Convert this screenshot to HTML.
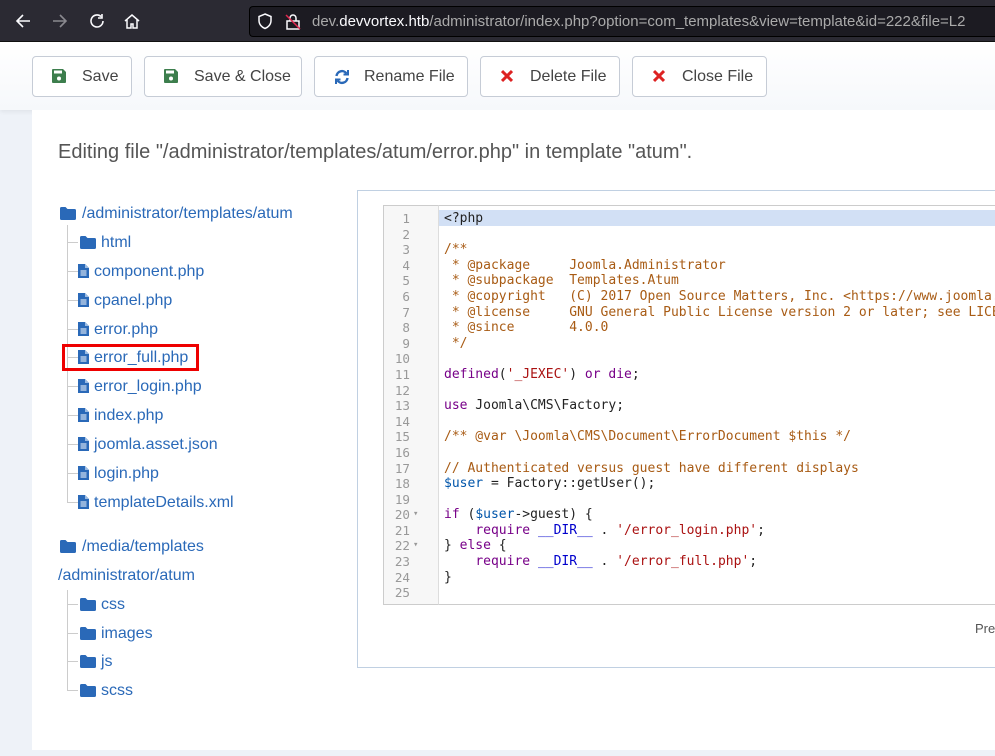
<!DOCTYPE html>
<html><head><meta charset="utf-8"><style>
*{margin:0;padding:0;box-sizing:border-box}
html,body{width:995px;height:756px;overflow:hidden}
body{background:#eef2f8;font-family:"Liberation Sans",sans-serif;position:relative}
.abs{position:absolute}
#bar{left:0;top:0;width:995px;height:42px;background:#2b2a33;border-bottom:1px solid #111}
#url{left:249px;top:6px;width:746px;height:31px;background:#1c1b22;border:1px solid #000;border-right:none;border-radius:4px 0 0 4px;color:#aaa;font-size:15px;line-height:29px;padding-left:62px;white-space:nowrap;overflow:hidden}
#url b{color:#fbfbfe;font-weight:normal}
#tb{left:0;top:42px;width:995px;height:68px;background:linear-gradient(#fff,#f6f8fb);box-shadow:0 2px 4px rgba(0,0,0,.06)}
.btn{position:absolute;top:56px;height:41px;border:1px solid #c6ccd6;border-radius:4px;background:#fff;color:#444;font-size:16px;line-height:39px;white-space:nowrap}
.btn i{position:absolute;left:19px;top:12px;display:block;line-height:0}
.btn span{position:absolute;left:49px}
#card{left:32px;top:110px;width:963px;height:640px;background:#fff}
h1{position:absolute;left:58px;top:141px;font-size:20px;font-weight:normal;color:#555;white-space:nowrap}
.t{position:absolute;color:#2a69b8;font-size:16px;white-space:nowrap;line-height:20px;margin-top:1px}
.vl{position:absolute;left:67px;width:1px;background:#ccc}
.hl{position:absolute;left:67px;width:11px;height:1px;background:#ccc}
#ed{left:357px;top:190px;width:638px;height:478px;border:1px solid #c0d0e2;border-right:none}
#cm{left:383px;top:205px;width:612px;height:400px;border:1px solid #ccc;border-right:none;background:#fff}
#gut{left:383px;top:205px;width:56px;height:400px;background:#f7f7f7;border-right:1px solid #ddd;border-left:1px solid #ccc;border-top:1px solid #ccc;border-bottom:1px solid #ccc}
pre{font-family:"DejaVu Sans Mono","Liberation Mono",monospace;font-size:13px;line-height:15.6px;position:absolute}
#ln{left:386px;top:211px;width:24px;text-align:right;color:#999;font-size:12.6px}
#code{left:444px;top:211px;width:551px;overflow:hidden;color:#222}
.c{color:#a85b14}.k{color:#770088}.v{color:#05a}.s{color:#a11}.d{color:#0000cc}
</style></head><body>
<div id="bar" class="abs">
<svg class="abs" style="left:14px;top:12px" width="18" height="18" viewBox="0 0 18 18" fill="none" stroke="#fbfbfe" stroke-width="1.6"><path d="M16 9H3M9 3L3 9l6 6"/></svg>
<svg class="abs" style="left:51px;top:12px" width="18" height="18" viewBox="0 0 18 18" fill="none" stroke="#8a898f" stroke-width="1.6"><path d="M2 9h13M9 3l6 6-6 6"/></svg>
<svg class="abs" style="left:88px;top:12px" width="18" height="18" viewBox="0 0 18 18" fill="none" stroke="#fbfbfe" stroke-width="1.6"><path d="M15 9a6 6 0 1 1-2-4.5M14 2v4h-4"/></svg>
<svg class="abs" style="left:123px;top:12px" width="18" height="18" viewBox="0 0 18 18" fill="none" stroke="#fbfbfe" stroke-width="1.5"><path d="M2 9l7-6 7 6M4 7.5V16h4v-4h2v4h4V7.5"/></svg>
</div>
<div id="url" class="abs">dev.<b>devvortex.htb</b>/administrator/index.php?option=com_templates&amp;view=template&amp;id=222&amp;file=L2</div>
<svg class="abs" style="left:257px;top:13px" width="16" height="17" viewBox="0 0 16 17" fill="none" stroke="#fbfbfe" stroke-width="1.5"><path d="M8 1l6 2.5v4c0 4-3 7-6 8-3-1-6-4-6-8v-4z"/></svg>
<svg class="abs" style="left:285px;top:13px" width="16" height="17" viewBox="0 0 16 17" fill="none" stroke-width="1.5"><rect x="2" y="8" width="12" height="8" stroke="#fbfbfe"/><path d="M5 8V5a3 3 0 0 1 6 0v3" stroke="#fbfbfe"/><path d="M1 2l14 14" stroke="#e22850"/></svg>
<div id="tb" class="abs"></div>
<div class="btn" style="left:32px;width:100px"><i><svg width="14" height="14" viewBox="0 0 14 14"><path d="M0 1a1 1 0 0 1 1-1h10l3 3v10a1 1 0 0 1-1 1H1a1 1 0 0 1-1-1z" fill="#3d7e4d"/><rect x="2" y="1.5" width="8" height="3" fill="#fff"/><circle cx="7" cy="9.5" r="2" fill="#fff"/></svg></i><span>Save</span></div>
<div class="btn" style="left:144px;width:158px"><i><svg width="14" height="14" viewBox="0 0 14 14"><path d="M0 1a1 1 0 0 1 1-1h10l3 3v10a1 1 0 0 1-1 1H1a1 1 0 0 1-1-1z" fill="#3d7e4d"/><rect x="2" y="1.5" width="8" height="3" fill="#fff"/><circle cx="7" cy="9.5" r="2" fill="#fff"/></svg></i><span>Save &amp; Close</span></div>
<div class="btn" style="left:314px;width:154px"><i><svg width="16" height="16" viewBox="0 0 16 16" fill="none" stroke="#2a69b8" stroke-width="2.4"><path d="M2.5 7A5.5 5.5 0 0 1 12.5 4.5M13.5 9A5.5 5.5 0 0 1 3.5 11.5"/><path d="M14 1v4.5H9.5M2 15v-4.5h4.5" stroke-width="2"/></svg></i><span>Rename File</span></div>
<div class="btn" style="left:480px;width:140px"><i style="left:20px"><svg width="12" height="14" viewBox="0 0 12 14"><path d="M1 2l10 10M11 2L1 12" stroke="#d22" stroke-width="3"/></svg></i><span>Delete File</span></div>
<div class="btn" style="left:632px;width:135px"><i style="left:20px"><svg width="12" height="14" viewBox="0 0 12 14"><path d="M1 2l10 10M11 2L1 12" stroke="#d22" stroke-width="3"/></svg></i><span>Close File</span></div>
<div id="card" class="abs"></div>
<h1>Editing file "/administrator/templates/atum/error.php" in template "atum".</h1>

<svg width="0" height="0" style="position:absolute"><defs>
<symbol id="fo" viewBox="0 0 16 13"><path d="M0 1.5A1.5 1.5 0 0 1 1.5 0h4l2 2h7A1.5 1.5 0 0 1 16 3.5v8a1.5 1.5 0 0 1-1.5 1.5h-13A1.5 1.5 0 0 1 0 11.5z" fill="#2a69b8"/></symbol>
<symbol id="fi" viewBox="0 0 11 14"><path d="M0 0h7l4 4v10H0z" fill="#2a69b8"/><path d="M7 0v4h4" fill="#9bbbe2"/><path d="M2.5 7h6M2.5 9h6M2.5 11h6" stroke="#fff" stroke-width="1"/></symbol>
</defs></svg>

<svg class="abs" style="left:60px;top:207px" width="16" height="13"><use href="#fo"/></svg><div class="t" style="left:82px;top:203px">/administrator/templates/atum</div>
<div class="vl" style="top:225px;height:277px"></div>
<div class="hl" style="top:242px"></div><svg class="abs" style="left:80px;top:236px" width="16" height="13"><use href="#fo"/></svg><div class="t" style="left:101px;top:232px">html</div>
<div class="hl" style="top:271px"></div><svg class="abs" style="left:78px;top:264px" width="11" height="14"><use href="#fi"/></svg><div class="t" style="left:94px;top:261px">component.php</div>
<div class="hl" style="top:300px"></div><svg class="abs" style="left:78px;top:293px" width="11" height="14"><use href="#fi"/></svg><div class="t" style="left:94px;top:290px">cpanel.php</div>
<div class="hl" style="top:329px"></div><svg class="abs" style="left:78px;top:322px" width="11" height="14"><use href="#fi"/></svg><div class="t" style="left:94px;top:319px">error.php</div>
<div class="hl" style="top:357px"></div><svg class="abs" style="left:78px;top:350px" width="11" height="14"><use href="#fi"/></svg><div class="t" style="left:94px;top:347px">error_full.php</div>
<div class="abs" style="left:62px;top:344px;width:137px;height:27px;border:3px solid #e00"></div>
<div class="hl" style="top:386px"></div><svg class="abs" style="left:78px;top:379px" width="11" height="14"><use href="#fi"/></svg><div class="t" style="left:94px;top:376px">error_login.php</div>
<div class="hl" style="top:415px"></div><svg class="abs" style="left:78px;top:408px" width="11" height="14"><use href="#fi"/></svg><div class="t" style="left:94px;top:405px">index.php</div>
<div class="hl" style="top:444px"></div><svg class="abs" style="left:78px;top:437px" width="11" height="14"><use href="#fi"/></svg><div class="t" style="left:94px;top:434px">joomla.asset.json</div>
<div class="hl" style="top:473px"></div><svg class="abs" style="left:78px;top:466px" width="11" height="14"><use href="#fi"/></svg><div class="t" style="left:94px;top:463px">login.php</div>
<div class="hl" style="top:502px"></div><svg class="abs" style="left:78px;top:495px" width="11" height="14"><use href="#fi"/></svg><div class="t" style="left:94px;top:492px">templateDetails.xml</div>

<svg class="abs" style="left:60px;top:540px" width="16" height="13"><use href="#fo"/></svg><div class="t" style="left:82px;top:536px">/media/templates</div>
<div class="t" style="left:58px;top:565px">/administrator/atum</div>
<div class="vl" style="top:590px;height:100px"></div>
<div class="hl" style="top:604px"></div><svg class="abs" style="left:80px;top:598px" width="16" height="13"><use href="#fo"/></svg><div class="t" style="left:101px;top:594px">css</div>
<div class="hl" style="top:633px"></div><svg class="abs" style="left:80px;top:627px" width="16" height="13"><use href="#fo"/></svg><div class="t" style="left:101px;top:623px">images</div>
<div class="hl" style="top:661px"></div><svg class="abs" style="left:80px;top:655px" width="16" height="13"><use href="#fo"/></svg><div class="t" style="left:101px;top:651px">js</div>
<div class="hl" style="top:690px"></div><svg class="abs" style="left:80px;top:684px" width="16" height="13"><use href="#fo"/></svg><div class="t" style="left:101px;top:680px">scss</div>

<div id="ed" class="abs"></div>
<div id="cm" class="abs"></div>
<div id="gut" class="abs"></div>
<div class="abs" style="left:439px;top:210px;width:556px;height:16px;background:#d2e0f5"></div>
<pre id="ln">1
2
3
4
5
6
7
8
9
10
11
12
13
14
15
16
17
18
19
20
21
22
23
24
25</pre>
<pre class="abs" style="left:413px;top:211px;color:#999;font-size:9px">



















▾

▾</pre>
<pre id="code">&lt;?php

<span class="c">/**
 * @package     Joomla.Administrator
 * @subpackage  Templates.Atum
 * @copyright   (C) 2017 Open Source Matters, Inc. &lt;https://www.joomla.org&gt;
 * @license     GNU General Public License version 2 or later; see LICENSE.txt
 * @since       4.0.0
 */</span>

<span class="k">defined</span>(<span class="s">'_JEXEC'</span>) <span class="k">or</span> <span class="k">die</span>;

<span class="k">use</span> Joomla\CMS\Factory;

<span class="c">/** @var \Joomla\CMS\Document\ErrorDocument $this */</span>

<span class="c">// Authenticated versus guest have different displays</span>
<span class="v">$user</span> = Factory::getUser();

<span class="k">if</span> (<span class="v">$user</span>-&gt;guest) {
    <span class="k">require</span> <span class="d">__DIR__</span> . <span class="s">'/error_login.php'</span>;
} <span class="k">else</span> {
    <span class="k">require</span> <span class="d">__DIR__</span> . <span class="s">'/error_full.php'</span>;
}
</pre>
<div class="abs" style="left:975px;top:621px;width:20px;overflow:hidden;font-size:13px;color:#555">Pre</div>
</body></html>
